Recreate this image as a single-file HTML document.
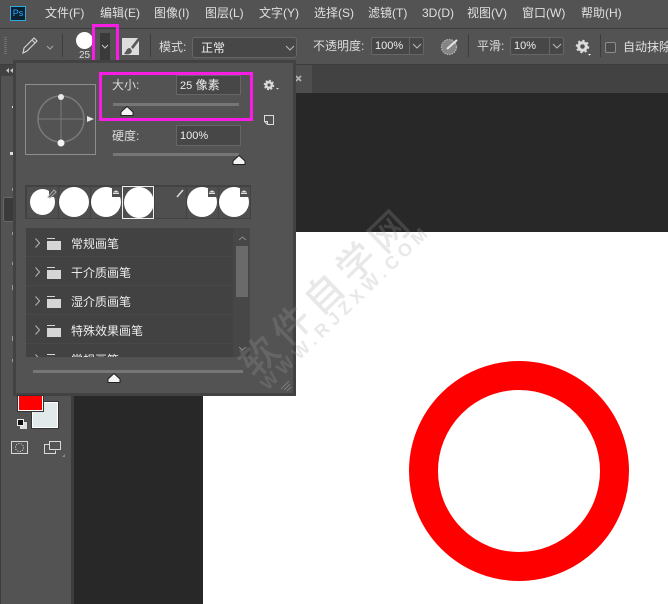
<!DOCTYPE html>
<html><head><meta charset="utf-8"><style>
*{box-sizing:border-box}
html,body{margin:0;padding:0}
body{width:668px;height:604px;overflow:hidden;position:relative;background:#282828;font-family:"Liberation Sans","Noto Sans CJK SC",sans-serif;color:#dcdcdc;font-size:12px}
.a{position:absolute}
.t{position:absolute;white-space:nowrap;line-height:16px}
.menu{font-size:12px;top:5px;color:#e0e0e0}
.box{position:absolute;border:1px solid #666;background:#474747;border-radius:2px}
.thumb{position:absolute;width:31px;height:31px;background:#4f4f4f}
.thumb i{position:absolute;left:0;top:1px;width:30px;height:30px;border-radius:50%;background:#fff;display:block}
.corner{position:absolute;right:1px;top:1px;width:10px;height:10px;background:#4f4f4f}
.row{position:absolute;left:26px;width:207px;height:29px;background:#424242;border-bottom:1px solid #484848;overflow:hidden}
.row .t{left:45px;top:8px;font-size:12px;color:#ececec}
.fold{position:absolute;left:21px;top:13px;width:14px;height:9px;background:#d6d6d6}
.fold:before{content:"";position:absolute;left:0;top:-3px;width:8px;height:1px;background:#d6d6d6}
.chev{position:absolute;left:9px;top:10px}
.m{position:absolute;left:12px;width:1px;height:3px;background:#9a9a9a}
</style></head><body>
<!-- top bars -->
<div class="a" style="left:0;top:0;width:668px;height:28px;background:#535353"></div>
<div class="a" style="left:0;top:28px;width:668px;height:1px;background:#3c3c3c"></div>
<div class="a" style="left:0;top:29px;width:668px;height:35px;background:#535353"></div>
<div class="a" style="left:0;top:64px;width:668px;height:1px;background:#3c3c3c"></div>
<div class="a" style="left:74px;top:65px;width:594px;height:28px;background:#424242"></div>
<div class="a" style="left:296px;top:65px;width:16px;height:28px;background:#4e4e4e"></div>
<svg class="a" style="left:295px;top:75px" width="8" height="8" fill="none"><path d="M1 1l5 5M6 1l-5 5" stroke="#b4b4b4" stroke-width="1.600"/></svg>
<div class="a" style="left:0;top:65px;width:71px;height:539px;background:#535353"></div>
<div class="a" style="left:0;top:65px;width:1px;height:539px;background:#3d3d3d"></div>
<div class="a" style="left:71px;top:65px;width:3px;height:539px;background:#3d3d3d"></div>
<div class="a" style="left:0;top:65px;width:71px;height:11px;background:#424242"></div>
<div class="a" style="left:203px;top:232px;width:465px;height:372px;background:#fff"></div>
<!-- ps logo -->
<div class="a" style="left:10px;top:6px;width:16px;height:15px;background:#0a2230;border:1px solid #2fa8e0;color:#31a8ff;font-size:9px;line-height:13px;text-align:center">Ps</div>
<div class="t menu" style="left:45px">文件(F)</div>
<div class="t menu" style="left:100px">编辑(E)</div>
<div class="t menu" style="left:154px">图像(I)</div>
<div class="t menu" style="left:205px">图层(L)</div>
<div class="t menu" style="left:259px">文字(Y)</div>
<div class="t menu" style="left:314px">选择(S)</div>
<div class="t menu" style="left:368px">滤镜(T)</div>
<div class="t menu" style="left:422px">3D(D)</div>
<div class="t menu" style="left:467px">视图(V)</div>
<div class="t menu" style="left:522px">窗口(W)</div>
<div class="t menu" style="left:581px">帮助(H)</div>
<!-- options -->
<svg class="a" style="left:0;top:29px" width="668" height="35" fill="none">
<path d="M5.500 8v18" stroke="#6e6e6e" stroke-dasharray="1 1" stroke-width="3"/>
<path d="M23 24l1-5 10-10 3 3-10 10z M32 11l3 3" stroke="#d0d0d0" stroke-width="1.200"/>
<path d="M47 17l3 3 3-3" stroke="#a8a8a8"/>
<path d="M62.500 5v23M150.500 5v23M468.500 5v23M600.500 5v23" stroke="#3d3d3d"/>
<rect x="122" y="9" width="17" height="17" fill="#dcdcdc"/>
<path d="M138 9l-7 9 2 2 6-8V9zM130 19q-3 0-4 3l-2 3q5 1 7-1 q2-2-1-5z" fill="#595959"/>
<path d="M102 17l3 3 3-3" stroke="#c8c8c8"/>
<circle cx="449" cy="18" r="7.500" fill="#858585" stroke="#b5b5b5" stroke-width="1.200" stroke-dasharray="1.500 1"/>
<path d="M447 20l10-9" stroke="#e4e4e4" stroke-width="2"/>
<circle cx="582.500" cy="17.500" r="3.800" stroke="#dcdcdc" stroke-width="3"/>
<circle cx="582.500" cy="17.500" r="5.800" stroke="#dcdcdc" stroke-width="1.800" stroke-dasharray="2.200 2.300"/>
<path d="M588 25h3l-1.500 1.500z" fill="#fff"/>
</svg>
<div class="a" style="left:76px;top:32px;width:17px;height:17px;border-radius:50%;background:#fff"></div>
<div class="t" style="left:79px;top:50px;font-size:10px;line-height:12px;color:#ddd">25</div>
<div class="a" style="left:100px;top:33px;width:10px;height:27px;background:#3a3a3a"></div>
<svg class="a" style="left:100px;top:42px" width="10" height="10" fill="none"><path d="M2 3l3 3 3-3" stroke="#c8c8c8"/></svg>
<div class="a" style="left:92px;top:24px;width:27px;height:41px;border:3px solid #f81ce5"></div>
<div class="t" style="left:159px;top:39px;color:#dcdcdc">模式:</div>
<div class="box" style="left:192px;top:37px;width:105px;height:21px;border-radius:3px"></div>
<div class="t" style="left:201px;top:40px;color:#eee">正常</div>
<svg class="a" style="left:285px;top:43px" width="10" height="10" fill="none"><path d="M1 3l4 4 4-4" stroke="#bbb"/></svg>
<div class="t" style="left:313px;top:38px">不透明度:</div>
<div class="box" style="left:371px;top:37px;width:53px;height:18px"></div>
<div class="a" style="left:409px;top:37px;width:1px;height:18px;background:#666"></div>
<div class="t" style="left:375px;top:38px;color:#eee;font-size:11px">100%</div>
<svg class="a" style="left:412px;top:41px" width="10" height="10" fill="none"><path d="M1 3l4 4 4-4" stroke="#bbb"/></svg>
<div class="t" style="left:477px;top:38px">平滑:</div>
<div class="box" style="left:510px;top:37px;width:54px;height:18px"></div>
<div class="a" style="left:549px;top:37px;width:1px;height:18px;background:#666"></div>
<div class="t" style="left:514px;top:38px;color:#eee;font-size:11px">10%</div>
<svg class="a" style="left:552px;top:41px" width="10" height="10" fill="none"><path d="M1 3l4 4 4-4" stroke="#bbb"/></svg>
<div class="a" style="left:605px;top:42px;width:11px;height:11px;border:1px solid #8c8c8c;border-radius:2px;background:#4a4a4a"></div>
<div class="t" style="left:623px;top:39px;width:45px;overflow:hidden;color:#e0e0e0">自动抹除</div>
<!-- panel -->
<div class="a" style="left:13px;top:60px;width:283px;height:336px;background:#535353;border:3px solid #424242"></div>
<svg class="a" style="left:25px;top:84px" width="72" height="72" fill="none">
<rect x=".5" y=".5" width="70" height="70" stroke="#8e8e8e"/>
<circle cx="36" cy="35" r="23" stroke="#7a7a7a" stroke-width="1.500"/>
<path d="M13 35h46M36 12v46" stroke="#7a7a7a"/>
<circle cx="36" cy="13" r="3" fill="#e8e8e8"/>
<circle cx="36" cy="59" r="3.500" fill="#f4f4f4"/>
<path d="M62 32l7 3-7 3z" fill="#e8e8e8"/>
</svg>
<div class="box" style="left:176px;top:75px;width:65px;height:20px;border-radius:0"></div>
<div class="a" style="left:99px;top:72px;width:154px;height:49px;border:3px solid #f81ce5"></div>
<div class="t" style="left:112px;top:77px">大小:</div>
<div class="t" style="left:180px;top:77px;color:#eee"><span style="font-size:11px">25</span> 像素</div>
<div class="a" style="left:113px;top:103px;width:126px;height:3px;background:#767676"></div>
<svg class="a" style="left:120px;top:106px" width="14" height="11"><path d="M7 .5L1 6v3.500h12V6z" fill="#f4f4f4" stroke="#222"/></svg>
<svg class="a" style="left:262px;top:78px" width="20" height="14" fill="none">
<circle cx="7" cy="7" r="2.800" stroke="#d8d8d8" stroke-width="2.500"/>
<circle cx="7" cy="7" r="4.500" stroke="#d8d8d8" stroke-width="1.500" stroke-dasharray="2 1.500"/>
<path d="M14 10h3l-1.500 1.500z" fill="#ddd"/></svg>
<svg class="a" style="left:263px;top:114px" width="12" height="12" fill="none"><path d="M1.500 1.500h9v9h-6l-3-3z M1.500 7.500h3v3" stroke="#dcdcdc"/></svg>
<div class="t" style="left:112px;top:128px">硬度:</div>
<div class="box" style="left:176px;top:125px;width:65px;height:21px;border-radius:0"></div>
<div class="t" style="left:180px;top:128px;color:#eee;font-size:11px">100%</div>
<div class="a" style="left:113px;top:153px;width:126px;height:3px;background:#767676"></div>
<svg class="a" style="left:232px;top:155px" width="14" height="11"><path d="M7 .5L1 6v3.500h12V6z" fill="#f4f4f4" stroke="#222"/></svg>
<!-- thumbs strip -->
<div class="a" style="left:25px;top:185px;width:226px;height:34px;background:#424242"></div>
<div class="thumb" style="left:27px;top:187px"><i style="left:3px;top:2px;width:25px;height:26px"></i><div class="corner" style="right:0;top:0;width:9px;height:10px"></div></div>
<div class="thumb" style="left:59px;top:187px"><i style="top:0"></i></div>
<div class="thumb" style="left:91px;top:187px"><i style="top:0"></i><div class="corner" style="right:0;top:0"></div></div>
<div class="thumb" style="left:122px;top:186px;border:1px solid #eee;width:32px;height:33px"><i style="left:1px;top:0;width:30px;height:31px"></i></div>
<div class="thumb" style="left:155px;top:187px"></div>
<div class="thumb" style="left:187px;top:187px"><i style="top:0"></i><div class="corner" style="right:0;top:0"></div></div>
<div class="thumb" style="left:219px;top:187px"><i style="top:0"></i><div class="corner" style="right:0;top:0"></div></div>
<svg class="a" style="left:27px;top:186px" width="224" height="14" fill="none">
<path d="M21 11l6-7 2 2-6 6z" stroke="#aaa"/>
<path d="M86 6.500q3-4 6 0zM182 6.500q3-4 6 0zM214 6.500q3-4 6 0z" fill="#ddd"/>
<path d="M86 7.500h6M182 7.500h6M214 7.500h6" stroke="#ddd"/>
<path d="M150 11l6-7" stroke="#ddd" stroke-width="1.500"/>
</svg>
<!-- list -->
<div class="a" style="left:26px;top:228px;width:224px;height:129px;background:#424242"></div>
<div class="a" style="left:233px;top:228px;width:17px;height:129px;background:#474747"></div>
<div class="a" style="left:236px;top:246px;width:12px;height:51px;background:#6a6a6a"></div>
<svg class="a" style="left:238px;top:235px" width="9" height="118" fill="none"><path d="M1 5l3.500-3 3.500 3M1 112l3.500 3 3.500-3" stroke="#8a8a8a"/></svg>
<div class="row" style="top:228px"><svg class="chev" width="5" height="10" fill="none"><path d="M.5 .5l4 4.500-4 4.500" stroke="#b5b5b5"/></svg><div class="fold"></div><div class="t">常规画笔</div></div>
<div class="row" style="top:257px"><svg class="chev" width="5" height="10" fill="none"><path d="M.5 .5l4 4.500-4 4.500" stroke="#b5b5b5"/></svg><div class="fold"></div><div class="t">干介质画笔</div></div>
<div class="row" style="top:286px"><svg class="chev" width="5" height="10" fill="none"><path d="M.5 .5l4 4.500-4 4.500" stroke="#b5b5b5"/></svg><div class="fold"></div><div class="t">湿介质画笔</div></div>
<div class="row" style="top:315px"><svg class="chev" width="5" height="10" fill="none"><path d="M.5 .5l4 4.500-4 4.500" stroke="#b5b5b5"/></svg><div class="fold"></div><div class="t">特殊效果画笔</div></div>
<div class="row" style="top:344px;height:13px;border:0"><svg class="chev" width="5" height="10" fill="none"><path d="M.5 .5l4 4.500-4 4.500" stroke="#b5b5b5"/></svg><div class="fold"></div><div class="t">常规画笔</div></div>
<div class="a" style="left:33px;top:370px;width:210px;height:3px;background:#767676"></div>
<svg class="a" style="left:107px;top:373px" width="14" height="11"><path d="M7 .5L1 6v3.500h12V6z" fill="#f4f4f4" stroke="#222"/></svg>
<svg class="a" style="left:279px;top:379px" width="13" height="13" fill="none"><path d="M2 10l8-8M5 11l6-6M8 12l4-4" stroke="#7c7c7c"/></svg>
<!-- toolbar leftovers -->
<svg class="a" style="left:5px;top:66px" width="9" height="9"><path d="M4 2v5L1 4.500zM8 2v5L5 4.500z" fill="#c4c4c4"/></svg>
<div class="a" style="left:12px;top:106px;width:1px;height:2px;background:#ddd"></div>
<div class="a" style="left:10px;top:152px;width:3px;height:3px;background:#ddd"></div>
<div class="a" style="left:3px;top:197px;width:10px;height:25px;background:#3a3a3a;border:1px solid #666;border-right:0;border-radius:2px 0 0 2px"></div>
<div class="m" style="top:188px"></div>
<div class="m" style="top:232px"></div>
<div class="m" style="top:262px"></div>
<div class="m" style="top:285px;height:5px"></div>
<div class="m" style="top:336px;height:5px"></div>
<div class="m" style="top:359px"></div>
<!-- colours -->
<div class="a" style="left:32px;top:402px;width:26px;height:26px;background:#e2e9eb;border:1px solid #fff;outline:1px solid #333"></div>
<div class="a" style="left:18px;top:396px;width:25px;height:15px;background:#f00;border:1px solid #fff;border-top:0;outline:1px solid #333"></div>
<div class="a" style="left:20px;top:422px;width:7px;height:7px;background:#ddd"></div>
<div class="a" style="left:17px;top:419px;width:7px;height:7px;background:#111;border:1px solid #eee"></div>
<svg class="a" style="left:10px;top:440px" width="58" height="24" fill="none">
<rect x="1.500" y="1.500" width="16" height="12" stroke="#d8d8d8"/>
<circle cx="9.500" cy="7.500" r="4" stroke="#e8e8e8" stroke-dasharray="1 1.500"/>
<path d="M45.500 10.500v3h-11v-9h5" stroke="#d8d8d8"/>
<rect x="39.500" y="1.500" width="11" height="8" stroke="#d8d8d8"/>
<path d="M52 17h3v-3z" fill="#8a8a8a"/>
</svg>
<!-- ring -->
<div class="a" style="left:409px;top:361px;width:220px;height:220px;border-radius:50%;border:29px solid #f00;background:#fff"></div>
<!-- watermark -->
<div class="t" style="left:175px;top:275px;width:300px;height:40px;text-align:center;font-size:38px;line-height:40px;letter-spacing:7px;text-indent:7px;font-weight:500;color:rgba(160,160,160,.24);transform:rotate(-44deg)">软件自学网</div>
<div class="t" style="left:194px;top:299px;width:300px;height:20px;text-align:center;font-size:18px;line-height:20px;letter-spacing:5px;text-indent:5px;font-weight:bold;color:rgba(160,160,160,.24);transform:rotate(-44deg)">WWW.RJZXW.COM</div>
</body></html>
